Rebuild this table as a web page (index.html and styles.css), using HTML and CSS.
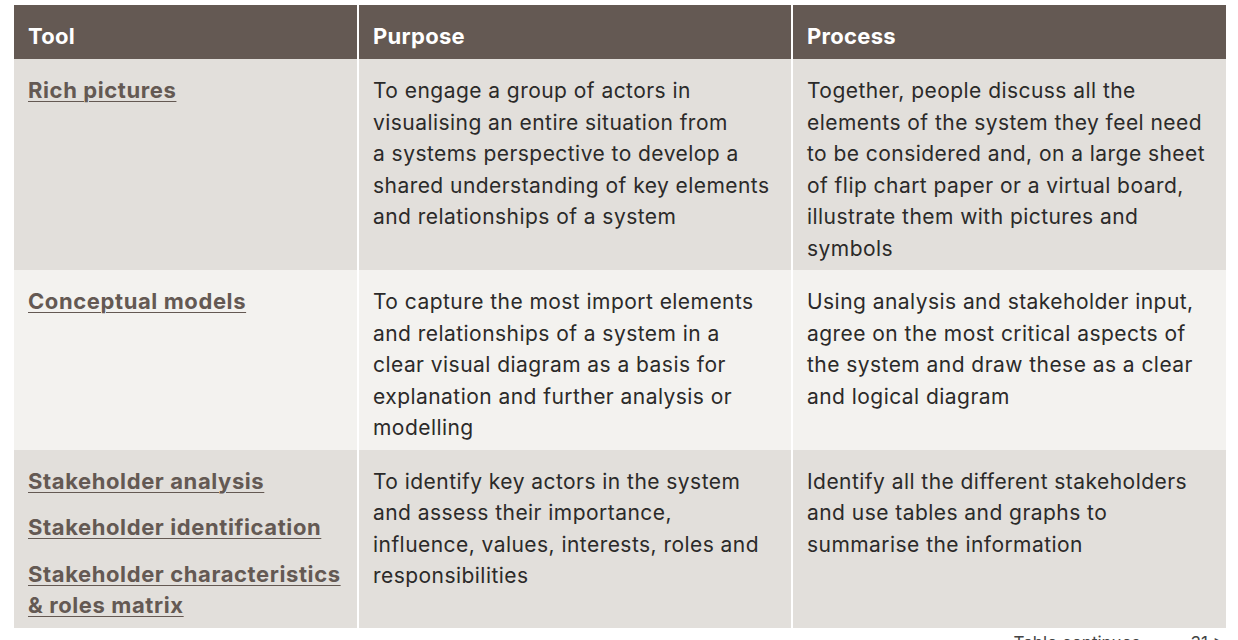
FILE: index.html
```html
<!DOCTYPE html>
<html lang="en">
<head>
<meta charset="utf-8">
<title>Tools table</title>
<link rel="stylesheet" href="styles.css">
</head>
<body>
<div class="page">
  <div class="table">
    <div class="cell head">Tool</div>
    <div class="cell head">Purpose</div>
    <div class="cell head">Process</div>

    <div class="cell dark"><a class="tool" href="#">Rich pictures</a></div>
    <div class="cell dark">To engage a group of actors in<br>visualising an entire situation from<br>a systems perspective to develop a<br>shared understanding of key elements<br>and relationships of a system</div>
    <div class="cell dark">Together, people discuss all the<br>elements of the system they feel need<br>to be considered and, on a large sheet<br>of flip chart paper or a virtual board,<br>illustrate them with pictures and<br>symbols</div>

    <div class="cell light"><a class="tool" href="#">Conceptual models</a></div>
    <div class="cell light">To capture the most import elements<br>and relationships of a system in a<br>clear visual diagram as a basis for<br>explanation and further analysis or<br>modelling</div>
    <div class="cell light">Using analysis and stakeholder input,<br>agree on the most critical aspects of<br>the system and draw these as a clear<br>and logical diagram</div>

    <div class="cell dark links">
      <a class="tool" href="#">Stakeholder analysis</a>
      <a class="tool" href="#">Stakeholder identification</a>
      <a class="tool" href="#">Stakeholder characteristics <br>&amp; roles matrix</a>
    </div>
    <div class="cell dark">To identify key actors in the system<br>and assess their importance,<br>influence, values, interests, roles and<br>responsibilities</div>
    <div class="cell dark">Identify all the different stakeholders<br>and use tables and graphs to<br>summarise the information</div>
  </div>
  <div class="footer">
    <span class="cont">Table continues</span>
    <span class="pg">31 &gt;</span>
  </div>
</div>
</body>
</html>
```

FILE: styles.css
```css
html, body {
  margin: 0;
  padding: 0;
  background: #ffffff;
}

body {
  font-family: Inter, "Open Sans", Arial, sans-serif;
  color: #2b2a29;
  overflow: hidden;
}

.page {
  padding: 5px 12px 0 14px;
}

.table {
  display: grid;
  grid-template-columns: 343px 432px 433px;
  column-gap: 2px;
  width: 1212px;
}

.cell {
  font-size: 21px;
  line-height: 31.5px;
  letter-spacing: 0.45px;
  padding: 16px 10px 6px 14px;
}

.head {
  background: #645953;
  color: #ffffff;
  font-weight: 700;
  height: 54px;
  box-sizing: border-box;
  padding: 16px 10px 0 14px;
  line-height: 30px;
  font-size: 22px;
  letter-spacing: 0.3px;
}

.dark {
  background: #e2dfdb;
}

.light {
  background: #f3f2ef;
}

.tool {
  color: #645953;
  font-weight: 700;
  font-size: 22px;
  letter-spacing: 0.6px;
  text-decoration: underline;
  text-decoration-thickness: 1px;
  text-underline-offset: 3px;
}

.links {
  display: flex;
  flex-direction: column;
  gap: 15px;
  align-items: flex-start;
}

.footer {
  display: flex;
  justify-content: flex-end;
  gap: 50px;
  padding: 5px 2px 0 0;
  font-size: 17px;
  line-height: 20px;
  color: #444;
}
```
